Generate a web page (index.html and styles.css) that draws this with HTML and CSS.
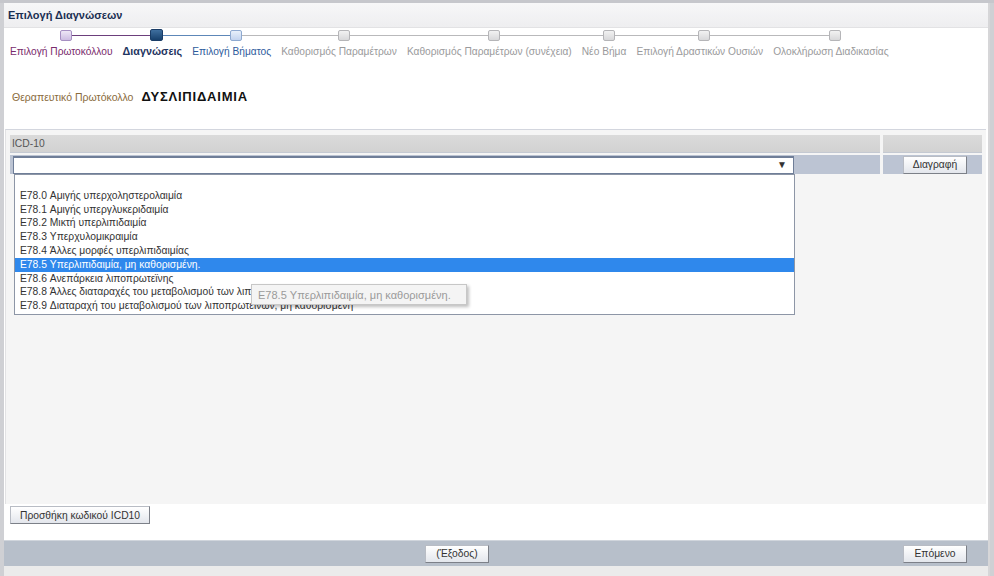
FILE: index.html
```html
<!DOCTYPE html>
<html lang="el">
<head>
<meta charset="utf-8">
<title>Επιλογή Διαγνώσεων</title>
<link rel="stylesheet" href="styles.css">
</head>
<body>
<div class="top-strip"></div>
<div class="dialog">
  <div class="titlebar">Επιλογή Διαγνώσεων</div>

  <div class="wizard">
    <div class="step done"><div class="marker"><span class="sq"></span></div><div class="label">Επιλογή Πρωτοκόλλου</div></div>
    <div class="step current"><div class="marker"><span class="sq"></span></div><div class="label">Διαγνώσεις</div></div>
    <div class="step next"><div class="marker"><span class="sq"></span></div><div class="label">Επιλογή Βήματος</div></div>
    <div class="step todo"><div class="marker"><span class="sq"></span></div><div class="label">Καθορισμός Παραμέτρων</div></div>
    <div class="step todo"><div class="marker"><span class="sq"></span></div><div class="label">Καθορισμός Παραμέτρων (συνέχεια)</div></div>
    <div class="step todo"><div class="marker"><span class="sq"></span></div><div class="label">Νέο Βήμα</div></div>
    <div class="step todo"><div class="marker"><span class="sq"></span></div><div class="label">Επιλογή Δραστικών Ουσιών</div></div>
    <div class="step todo last"><div class="marker"><span class="sq"></span></div><div class="label">Ολοκλήρωση Διαδικασίας</div></div>
  </div>

  <div class="protocol">
    <span class="plabel">Θεραπευτικό Πρωτόκολλο</span>
    <span class="pvalue">ΔΥΣΛΙΠΙΔΑΙΜΙΑ</span>
  </div>

  <div class="panel">
    <div class="grid">
      <div class="hcell">ICD-10</div>
      <div class="hcell"></div>
      <div class="scell"><div class="select"><span class="arrow">▼</span></div></div>
      <div class="scell btncell"><button class="btn">Διαγραφή</button></div>
    </div>

    <ul class="dropdown">
      <li></li>
      <li>E78.0 Αμιγής υπερχοληστερολαιμία</li>
      <li>E78.1 Αμιγής υπεργλυκεριδαιμία</li>
      <li>E78.2 Μικτή υπερλιπιδαιμία</li>
      <li>E78.3 Υπερχυλομικραιμία</li>
      <li>E78.4 Άλλες μορφές υπερλιπιδαιμίας</li>
      <li class="sel">E78.5 Υπερλιπιδαιμία, μη καθορισμένη.</li>
      <li>E78.6 Ανεπάρκεια λιποπρωτεϊνης</li>
      <li>E78.8 Άλλες διαταραχές του μεταβολισμού των λιποπρωτεϊνών</li>
      <li>E78.9 Διαταραχή του μεταβολισμού των λιποπρωτεϊνών, μη καθορισμένη</li>
    </ul>
    <div class="tooltip">E78.5 Υπερλιπιδαιμία, μη καθορισμένη.</div>
  </div>

  <div class="addrow"><button class="btn wide">Προσθήκη κωδικού ICD10</button></div>

  <div class="footer">
    <button class="btn">(Έξοδος)</button>
    <button class="btn next-btn">Επόμενο</button>
  </div>
  <div class="bottom"></div>
</div>
</body>
</html>
```

FILE: styles.css
```css
* { box-sizing: border-box; }

html, body {
  margin: 0;
  padding: 0;
  height: 576px;
  overflow: hidden;
}

body {
  background: #cfd0d4;
  font-family: "Liberation Sans", Arial, sans-serif;
  font-size: 10.3px;
  color: #333;
}

.top-strip {
  height: 3px;
  background: #c6c7cc;
}

.dialog {
  margin: 0 4px 0 4px;
  height: 573px;
  background: #ffffff;
  display: flex;
  flex-direction: column;
  border-right: 2px solid #d6d6d8;
}

.titlebar {
  height: 25px;
  padding: 0 0 0 4px;
  display: flex;
  align-items: center;
  font-weight: bold;
  font-size: 11px;
  color: #1b2f52;
  background: linear-gradient(#f7f7f8, #eeeef0);
  border-bottom: 1px solid #e2e2e4;
}

/* wizard */
.wizard {
  display: flex;
  padding: 1px 0 0 1px;
  height: 32px;
}

.step {
  display: flex;
  flex-direction: column;
  align-items: center;
  padding: 0 5px;
}

.marker {
  position: relative;
  height: 14px;
  width: 100%;
  display: flex;
  justify-content: center;
  padding-left: 9px;
}

.marker::before,
.marker::after {
  content: "";
  position: absolute;
  top: 6px;
  height: 1px;
  background: #b9b9bb;
}
.marker::before { left: -5px; right: calc(50% - 4px); }
.marker::after { left: calc(50% + 4px); right: -5px; }

.step:first-child .marker::before { display: none; }
.step.last .marker::after { display: none; }

.step.done .marker::after { background: #6c3f7c; }
.step.current .marker::before { background: #6c3f7c; }
.step.current .marker::after { background: #5d87b8; }
.step.next .marker::before { background: #5d87b8; }

.sq {
  position: relative;
  z-index: 1;
  width: 12px;
  height: 11px;
  margin-top: 1px;
  border-radius: 2px;
  border: 1px solid #b5b5b8;
  background: linear-gradient(#f2f2f2, #d8d8da);
}

.step.done .sq {
  border-color: #a68fc2;
  background: linear-gradient(#eee6f6, #cdbde2);
}
.step.current .sq {
  width: 13px;
  height: 12px;
  margin-top: 0;
  border-color: #1a3c66;
  background: linear-gradient(#3f6f9f, #17406c);
}
.step.next .sq {
  border-color: #8ea9d0;
  background: linear-gradient(#e8f0fb, #c2d3ee);
}

.label {
  margin-top: 2px;
  white-space: nowrap;
  font-size: 10.2px;
  line-height: 13px;
  color: #9a9a9c;
}
.step.done .label { color: #7a2b6d; }
.step.current .label { color: #1f3561; font-weight: bold; font-size: 10.8px; }
.step.next .label { color: #2e5b9c; }

/* protocol */
.protocol {
  display: flex;
  align-items: center;
  gap: 8px;
  padding: 4px 0 0 8px;
  height: 69px;
}
.plabel {
  color: #8a6b3c;
  font-size: 10.5px;
}
.pvalue {
  font-weight: bold;
  font-size: 13px;
  color: #111;
  letter-spacing: 0.8px;
}

/* panel */
.panel {
  position: relative;
  margin: 0 2px 0 1px;
  height: 375px;
  background: #f5f5f5;
  border-top: 1px solid #d3d6de;
  border-left: 1px solid #e2e2e4;
  padding: 5px 4px 0 4px;
}

.grid {
  display: grid;
  grid-template-columns: 870px 99px;
  grid-template-rows: 18px 19px;
  column-gap: 3px;
  row-gap: 2px;
}

.hcell {
  background: linear-gradient(#dadada, #d2d2d2);
  color: #555;
  display: flex;
  align-items: center;
  padding-left: 2px;
  border-bottom: 1px solid #c4c9d2;
}

.scell {
  background: #bcc4d3;
  display: flex;
  align-items: center;
  padding-left: 3px;
}

.select {
  position: relative;
  width: 781px;
  height: 18px;
  background: #fff;
  border: 1px solid #6f7e98;
  border-top-width: 2px;
}
.arrow {
  position: absolute;
  right: 6px;
  top: 1px;
  font-size: 10px;
  line-height: 12px;
  color: #333;
}

.btncell {
  justify-content: center;
  padding-left: 5px;
}

.btn {
  font-family: "Liberation Sans", Arial, sans-serif;
  font-size: 10.3px;
  color: #333;
  height: 18px;
  width: 64px;
  padding: 0 4px;
  border: 1px solid #b8bcc4;
  border-right-color: #7c8088;
  border-bottom-color: #7c8088;
  background: linear-gradient(#ffffff, #e3e6ec);
  cursor: pointer;
}
.btn.wide { width: 140px; }

/* dropdown */
.dropdown {
  position: absolute;
  left: 8px;
  top: 44px;
  width: 781px;
  height: 141px;
  margin: 0;
  padding: 0;
  list-style: none;
  background: #fff;
  border: 1px solid #8d96a6;
  z-index: 2;
}
.dropdown li {
  height: 13.8px;
  line-height: 13.8px;
  padding-left: 5px;
  color: #333;
  white-space: nowrap;
}
.dropdown li.sel {
  background: #2f88ec;
  color: #fff;
}

.tooltip {
  position: absolute;
  left: 245px;
  top: 154px;
  width: 216px;
  height: 21px;
  padding: 4px 0 0 6px;
  background: #f4f4f4;
  border: 1px solid #c7c7c7;
  color: #9a9a9a;
  font-size: 11px;
  white-space: nowrap;
  box-shadow: 2px 2px 3px rgba(0,0,0,0.25);
  z-index: 3;
}

/* add row */
.addrow {
  height: 36px;
  padding: 2px 0 0 6px;
  background: #fff;
}

/* footer */
.footer {
  height: 26px;
  display: flex;
  align-items: center;
  padding: 0 21px 0 421px;
  background: #b7bfca;
  border-top: 1px solid #d0d5dc;
}
.next-btn { margin-left: auto; }

.bottom {
  flex: 1;
  background: #ebebeb;
}
```
